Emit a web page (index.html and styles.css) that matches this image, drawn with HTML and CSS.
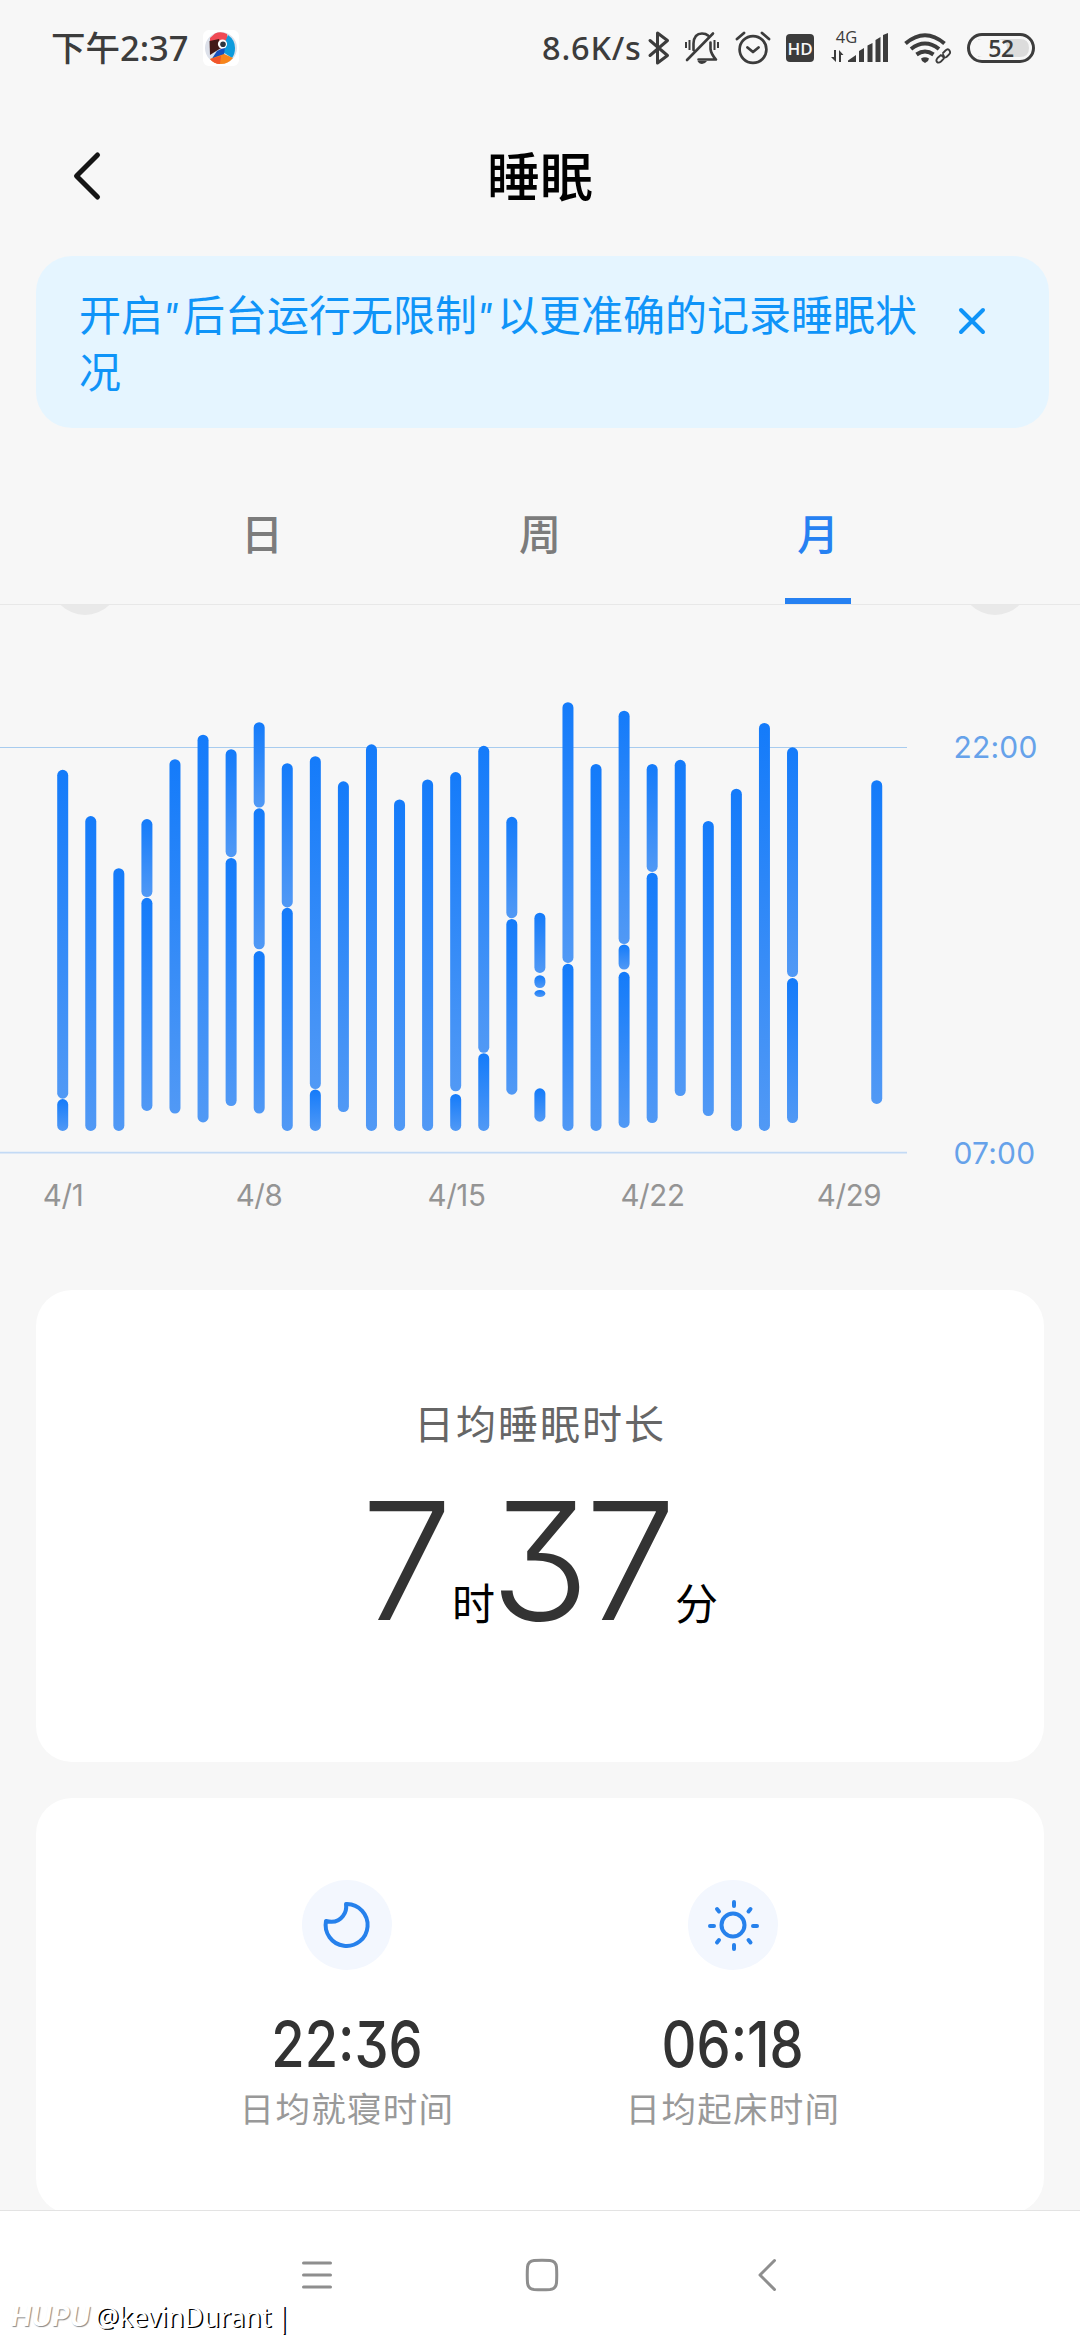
FILE: index.html
```html
<!DOCTYPE html>
<html lang="zh-CN">
<head>
<meta charset="utf-8">
<title>睡眠</title>
<link rel="stylesheet" href="styles.css">
</head>
<body>
<header class="status">
  <span class="clock">下午2:37</span>
  <svg class="app-badge" viewBox="0 0 36 36">
    <rect width="36" height="36" rx="6" fill="#fff"/>
    <circle cx="18" cy="18" r="16" fill="#dde1ea"/>
    <path d="M7 8 12 3.500Q18 1 24 4L25 10 17 19 7 12Z" fill="#f04a55"/>
    <path d="M6.500 11 16 9 18 18 7 25Z" fill="#431a18"/>
    <path d="M25 5Q32 10 32 18 32 24 29 28L20 22 22 12Z" fill="#0d9bdc"/>
    <path d="M22 17 21 25 8 30 14 21Z" fill="#1550bd"/>
    <path d="M7 29 21 24 30 28Q25 34 18 34 11 34 7 29Z" fill="#f7851c"/>
    <path d="M7 29 18 26 17 34Q11 34 7 29Z" fill="#f2552c"/>
    <circle cx="19.500" cy="14" r="4.600" fill="#fff"/><circle cx="20" cy="14.300" r="2.800" fill="#2c3540"/>
  </svg>
  <span class="speed">8.6K/s</span>
  <svg class="sys-icons" viewBox="645 20 395 56">
    <g fill="none" stroke="#3c3c3c" stroke-width="3" stroke-linejoin="round" stroke-linecap="round">
      <path d="M650 40.500 667.500 55.500 657.500 63V33L667.500 40.500 650 55.500"/>
      <path d="M693.500 50V43.500Q694 33.500 702 33.500 706 33.500 708 35.500M710.500 42.500V49Q711 54 716 59.500H698.500M687 60 713 33.500" stroke-width="2.600"/>
      <path d="M686 42V48M689.500 40V50M714.500 40V50M718 42V48" stroke-width="2" stroke-linecap="butt"/>
      <circle cx="753" cy="49.500" r="13.400" stroke-width="2.700"/>
      <path d="M747.500 47.500 753 52 758.500 47.500M737 39 744 33M762 33 769 39" stroke-width="2.800"/>
      <rect x="968.500" y="34.500" width="65" height="27" rx="13.500"/>
    </g>
    <g fill="#3c3c3c">
      <path d="M697.500 61H707Q705 64 702 64T697.500 61Z"/>
      <rect x="786" y="34" width="28" height="28" rx="4"/>
      <path d="M848 62V60.500L856 55V62ZM859 62V51L864 48V62ZM867.500 62V45.500L872.500 43V62ZM875.500 62V40L880.500 37V62ZM883 62V35L888 33V62Z"/>
      <path d="M834 50H836V62L831 57H834ZM839 62V50L843.500 55H841V62Z"/>
      <path d="M921 58.500Q925 56 929 58.500L928 61 925 63 922 61Z"/>
    </g>
    <path d="M978 39H1020Q1029 39 1029 48T1020 57H978Z" fill="#dcdcdc"/>
    <rect x="973" y="39" width="34" height="18" rx="9" fill="#f7f7f7"/>
    <g fill="none" stroke="#3c3c3c" stroke-width="4"><path d="M905.500 43.500Q925 27 944.500 43.500M911 49Q925 38 939 49M916.500 54.500Q925 48.500 933.500 54.500"/></g>
    <g fill="none" stroke="#3c3c3c" stroke-width="1.800" stroke-linecap="round"><path d="M943 53 945.500 50.500Q948 48 949.500 50.500T949 54.500L946.500 57Q944 58.500 942 56M941 55 937.500 58Q935.500 60.500 937 62T941 61.500L943.500 59Q945 57 943 54.500"/></g>
    <text class="t-hd" x="800" y="54.500" text-anchor="middle">HD</text>
    <text class="t-net" x="846.500" y="43" text-anchor="middle">4G</text>
    <text class="t-bat" x="1001" y="56.500" text-anchor="middle">52</text>
  </svg>
</header>

<div class="titlebar">
  <svg class="back" viewBox="0 0 30 50"><path d="M25.500 4 4.500 25 25.500 46"/></svg>
  <h1>睡眠</h1>
</div>

<section class="banner">
  <p>开启<i>"</i>后台运行无限制<i>"</i>以更准确的记录睡眠状况</p>
  <svg class="close" viewBox="0 0 28 28"><path d="M3 3 25 25M25 3 3 25"/></svg>
</section>

<nav class="tabs">
  <span class="tab">日</span>
  <span class="tab">周</span>
  <span class="tab active">月</span>
</nav>

<main class="content">
  <svg class="chart" viewBox="0 605 1080 685">
    <defs><linearGradient id="g" x1="0" y1="0" x2="0" y2="1"><stop offset="0" stop-color="#147bfa"/><stop offset="1" stop-color="#5199f5"/></linearGradient></defs>
    <circle cx="85" cy="580.500" r="34.500" fill="#e9e9e9"/><circle cx="995" cy="580.500" r="34.500" fill="#e9e9e9"/>
    <path d="M0 747.500H907" stroke="#a8ccef" stroke-width="1.200"/><path d="M0 1152.700H907" stroke="#c3daf5" stroke-width="1.700"/>
    <g id="bars" fill="url(#g)"></g>
    <g class="hours"><text x="953.500" y="758">22:00</text><text x="953.500" y="1164">07:00</text></g>
    <g class="dates" text-anchor="middle"><text x="63" y="1206">4/1</text><text x="259" y="1206">4/8</text><text x="456.500" y="1206">4/15</text><text x="652.500" y="1206">4/22</text><text x="849" y="1206">4/29</text></g>
  </svg>

  <section class="card average">
    <h2>日均睡眠时长</h2>
    <p class="duration"><b class="one">7</b><span>时</span><b class="two">37</b><span>分</span></p>
  </section>

  <section class="card times">
    <div class="time">
      <svg class="round" viewBox="0 0 90 90"><circle cx="45" cy="45" r="45" fill="#f3f7fe"/><path class="line" d="M45 24A21 21 0 1 1 24 41Q35 44 41 36 45 31 44 24Z"/></svg>
      <strong>22:36</strong>
      <span>日均就寝时间</span>
    </div>
    <div class="time">
      <svg class="round" viewBox="0 0 90 90"><circle cx="45" cy="45" r="45" fill="#f3f7fe"/><circle class="line" cx="45" cy="45" r="11.500"/><path class="line" d="M46 22V26M46 65V69M22 46H26M65 46H69M29 29 31 31.500M62.500 29 60.500 31.500M29 62.500 31 60M62.500 62.500 60.500 60"/></svg>
      <strong>06:18</strong>
      <span>日均起床时间</span>
    </div>
  </section>
</main>

<footer class="navbar">
  <svg viewBox="0 0 36 36"><path d="M4.500 6H31.500M4.500 18H31.500M4.500 30H31.500"/></svg>
  <svg viewBox="0 0 36 36"><path d="M10 3.500Q18 3 26 3.500 31.800 4 32.500 10 33 18 32.500 26 31.800 32 26 32.500 18 33 10 32.500 4.200 32 3.500 26 3 18 3.500 10 4.200 4 10 3.500Z"/></svg>
  <svg viewBox="0 0 36 36"><path d="M25.500 3.500 11 18 25.500 32.500"/></svg>
  <div class="watermark"><em>HUPU</em><span>@kevinDurant</span><span class="pipe">|</span></div>
</footer>
<script src="chart.js"></script>
</body>
</html>
```
FILE: chart.js
```js
// Sleep segments per day of the month: [start, end] on the chart's vertical scale.
const ORIGIN = 660;
const UNIT = 0.3699;
const days = {
  1: [[297, 1186], [1187, 1273]], 2: [[422, 1273]], 3: [[563, 1273]],
  4: [[430, 641], [643, 1219]], 5: [[268, 1226]], 6: [[202, 1250]],
  7: [[241, 533], [535, 1206]], 8: [[168, 399], [401, 782], [787, 1226]],
  9: [[279, 669], [670, 1273]], 10: [[260, 1160], [1161, 1273]], 11: [[328, 1222]],
  12: [[228, 1273]], 13: [[377, 1273]], 14: [[323, 1273]],
  15: [[303, 1166], [1173, 1273]], 16: [[232, 1062], [1063, 1273]],
  17: [[424, 698], [700, 1175]], 18: [[683, 846], [852, 887], [892, 911], [1158, 1248]],
  19: [[114, 819], [821, 1273]], 20: [[281, 1273]],
  21: [[137, 768], [769, 837], [843, 1265]], 22: [[281, 573], [575, 1252]],
  23: [[270, 1179]], 24: [[435, 1233]], 25: [[348, 1273]], 26: [[170, 1273]],
  27: [[236, 857], [860, 1252]], 30: [[325, 1200]]
};
const bars = document.getElementById("bars");
for (const [day, segments] of Object.entries(days)) {
  for (const [top, bottom] of segments) {
    const bar = document.createElementNS("http://www.w3.org/2000/svg", "rect");
    const height = (bottom - top) * UNIT;
    bar.setAttribute("x", 57.2 + (day - 1) * 28.07);
    bar.setAttribute("y", ORIGIN + top * UNIT);
    bar.setAttribute("width", 11);
    bar.setAttribute("height", height);
    bar.setAttribute("rx", 5.5);
    bar.setAttribute("ry", Math.min(5.5, height / 2));
    bars.append(bar);
  }
}
```
FILE: styles.css
```css
* { box-sizing: border-box; margin: 0; padding: 0; }
body {
  width: 1080px; height: 2340px; overflow: hidden;
  display: flex; flex-direction: column;
  background: #f7f7f7; color: #333;
  font-family: Inter, "Noto Sans CJK SC", sans-serif;
}
svg { display: block; flex: none; }

.status { height: 96px; padding: 0 40px 0 51px; display: flex; align-items: center; color: #3c3c3c; }
.clock { width: 152px; font: 500 34.500px/48px "Noto Sans", "Noto Sans CJK SC", sans-serif; white-space: nowrap; }
.app-badge { width: 36px; height: 36px; }
.speed { margin-left: auto; width: 103px; font: 500 32.500px/48px "Noto Sans", sans-serif; letter-spacing: 0.800px; white-space: nowrap; }
.sys-icons { width: 395px; height: 56px; overflow: visible; }
.t-hd { font: 600 17px "Open Sans", sans-serif; fill: #f7f7f7; }
.t-net { font: 500 16.500px "Open Sans", sans-serif; fill: #3c3c3c; }
.t-bat { font: 600 23px "Open Sans", sans-serif; fill: #3c3c3c; letter-spacing: -0.500px; }

.titlebar { height: 160px; padding: 0 72px; display: grid; grid-template-columns: 30px 1fr 30px; align-items: center; }
.back { width: 30px; height: 50px; fill: none; stroke: #151515; stroke-width: 5; stroke-linecap: round; stroke-linejoin: round; }
h1 { padding-bottom: 4px; text-align: center; color: #000; font: 500 53px/80px "Noto Sans CJK SC", sans-serif; }

.banner { height: 172px; margin: 0 31px 0 36px; padding: 28px 63px 0 43px; display: flex; justify-content: space-between; border-radius: 36px; background: #e5f5ff; color: #0f94f8; }
.banner p { width: 850px; font: 400 42px/57px "Noto Sans CJK SC", sans-serif; }
.banner i { display: inline-block; width: 20px; height: 40px; text-indent: -1px; vertical-align: 2px; font: italic 400 36px/40px Inter, sans-serif; }
.close { width: 28px; height: 28px; margin-top: 23px; fill: none; stroke: #0f94f8; stroke-width: 4; stroke-linecap: round; }

.tabs { height: 177px; padding: 0 123px; display: grid; grid-template-columns: repeat(3, 278px); justify-items: center; align-items: end; border-bottom: 1px solid #e8e8e8; }
.tab { width: 66px; height: 107px; text-align: center; color: #7c7c7c; font: 500 42px/70px "Noto Sans CJK SC", sans-serif; border-bottom: 6px solid transparent; }
.tab.active { color: #2681f2; border-color: #2681f2; }

.content { height: 1605px; overflow: hidden; }
.chart { width: 1080px; height: 685px; }
.hours { font: 400 30px Inter, sans-serif; fill: #66a2ea; letter-spacing: 0.2px; }
.dates { font: 400 29.500px Inter, sans-serif; fill: #949494; letter-spacing: -0.4px; }

.card { width: 1008px; margin: 0 36px 36px; border-radius: 36px; background: #fff; }
.average { height: 472px; padding-top: 102px; text-align: center; }
h2 { color: #666; font: 400 40px/60px "Noto Sans CJK SC", sans-serif; letter-spacing: 2px; }
.duration { height: 190px; margin-top: 14px; display: flex; justify-content: center; align-items: baseline; }
.duration b { font: 300 164px/190px Inter, sans-serif; font-feature-settings: "cv09"; display: inline-block; white-space: nowrap; text-align: left; }
.duration .one { width: 90px; }
.duration .two { width: 178px; letter-spacing: -5px; text-indent: -6px; }
.duration span { color: #000; width: 45px; font: 400 43px/60px "Noto Sans CJK SC", sans-serif; }

.times { height: 416px; padding: 82px 118px 0; display: grid; grid-template-columns: repeat(2, 386px); }
.time { display: flex; flex-direction: column; align-items: center; }
.round { width: 90px; height: 90px; }
.line { fill: none; stroke: #2681ec; stroke-width: 4; stroke-linecap: round; stroke-linejoin: round; }
.time strong { margin-top: 36px; font: 450 63px/76px Inter, sans-serif; font-feature-settings: "cv09"; transform: scaleX(0.86); }
.time span { margin-top: -1px; color: #999; font: 400 34.500px/52px "Noto Sans CJK SC", sans-serif; letter-spacing: 1.300px; }

.navbar { position: relative; height: 130px; padding: 46px 295px 0 299px; display: flex; justify-content: space-between; border-top: 1px solid #e3e3e3; background: #fff; }
.navbar svg { width: 36px; height: 36px; fill: none; stroke: #8e8e8e; stroke-width: 3; stroke-linecap: round; stroke-linejoin: round; }
.watermark { position: absolute; left: 11px; bottom: 5px; display: flex; align-items: center; color: #fff; font: 400 26.500px/36px "Noto Sans", sans-serif; text-shadow: 1.500px 1px 0.500px #000; }
.watermark em { width: 84px; font: italic 700 27px/36px Inter, sans-serif; letter-spacing: 0.500px; text-shadow: 1px 1px 1px #888; }
.pipe { margin-left: 5px; }
```
